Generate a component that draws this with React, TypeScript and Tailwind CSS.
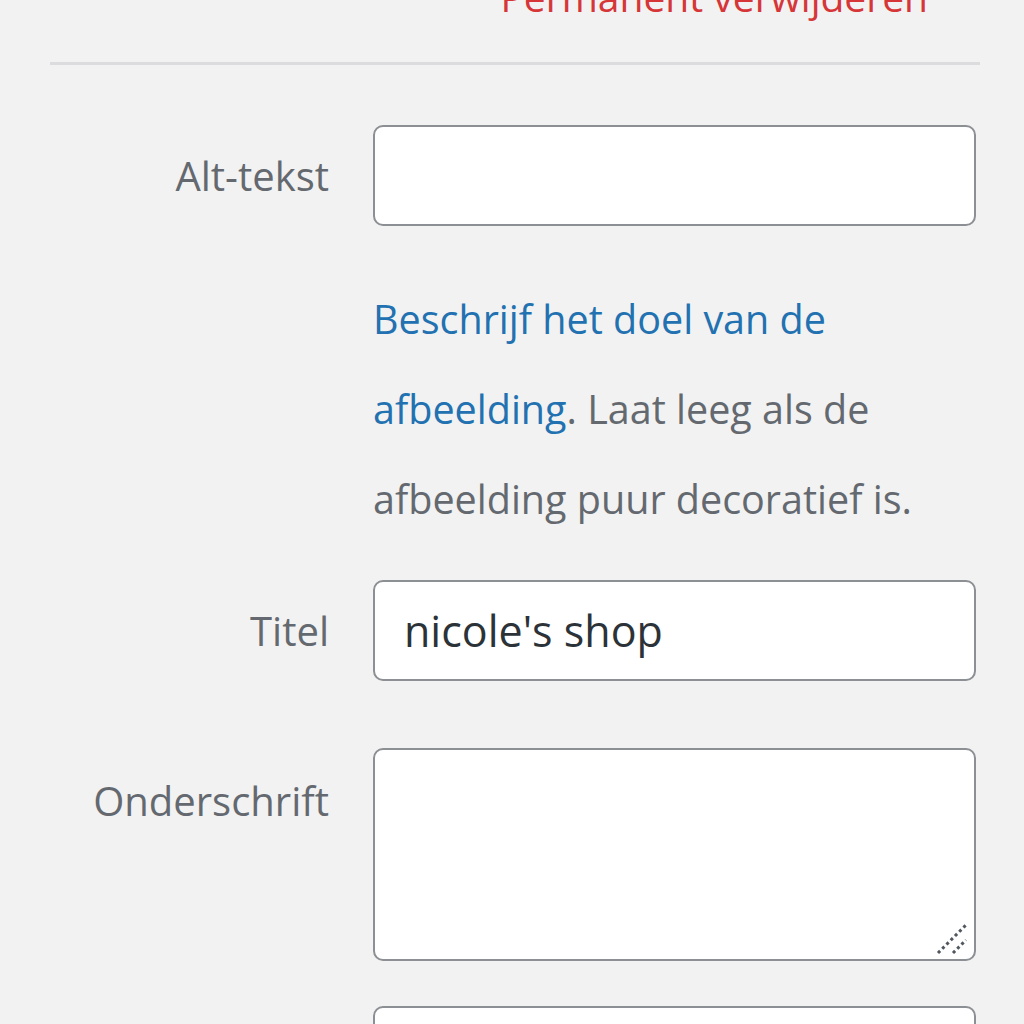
import type { ReactNode } from "react";

const font = { fontFamily: '"Open Sans", "Noto Sans", sans-serif' };

function Row({ label, children, top }: { label: string; children: ReactNode; top?: boolean }) {
	return (
		<div className={`flex gap-[44px] ${top ? "items-start" : "items-center"}`}>
			<label
				className={`w-[279px] shrink-0 text-right text-[40px] leading-[54px] text-[#646970] ${top ? "pt-[26px]" : ""}`}
			>
				{label}
			</label>
			<div className="w-[603px]">{children}</div>
		</div>
	);
}

const fieldClass =
	"w-full rounded-[10px] border-[2.5px] border-[#8c8f94] bg-white px-[29px] text-[43px] text-[#2c3338] outline-none";

export default function App() {
	return (
		<main
			className="h-[1024px] w-[1024px] overflow-hidden bg-[#f2f2f2] pl-[50px] pr-[44px]"
			style={font}
		>
			<div className="-mt-[30px] flex justify-end pr-[52px]">
				<button type="button" className="text-[39px] leading-[54px] text-[#d63638]">
					Permanent verwijderen
				</button>
			</div>

			<div className="mt-[38px] h-[3px] bg-[#dcdcde]" />

			<div className="mt-[60px] flex flex-col">
				<Row label="Alt-tekst">
					<input type="text" className={`h-[101px] ${fieldClass}`} />
				</Row>

				<Row label="">
					<p className="pt-[48px] text-[39.5px] leading-[90px] text-[#646970]">
						<a href="#" className="text-[#2271b1]">
							Beschrijf het doel van de afbeelding
						</a>
						. Laat leeg als de afbeelding puur decoratief is.
					</p>
				</Row>

				<div className="mt-[36px]">
					<Row label="Titel">
						<input type="text" defaultValue="nicole's shop" className={`h-[101px] ${fieldClass}`} />
					</Row>
				</div>

				<div className="mt-[67px]">
					<Row label="Onderschrift" top>
						<div className="relative">
							<textarea className={`block h-[213px] resize-none ${fieldClass}`} />
							<svg
								className="absolute bottom-[6px] right-[8px]"
								width="32"
								height="32"
								viewBox="0 0 32 32"
							>
								<line x1="2" y1="30" x2="30" y2="2" stroke="#50575e" strokeWidth="3" strokeDasharray="3 3" />
								<line x1="17" y1="30" x2="30" y2="17" stroke="#50575e" strokeWidth="3" strokeDasharray="3 3" />
							</svg>
						</div>
					</Row>
				</div>

				<div className="mt-[45px]">
					<Row label="">
						<input type="text" className={`h-[101px] ${fieldClass}`} />
					</Row>
				</div>
			</div>
		</main>
	);
}
